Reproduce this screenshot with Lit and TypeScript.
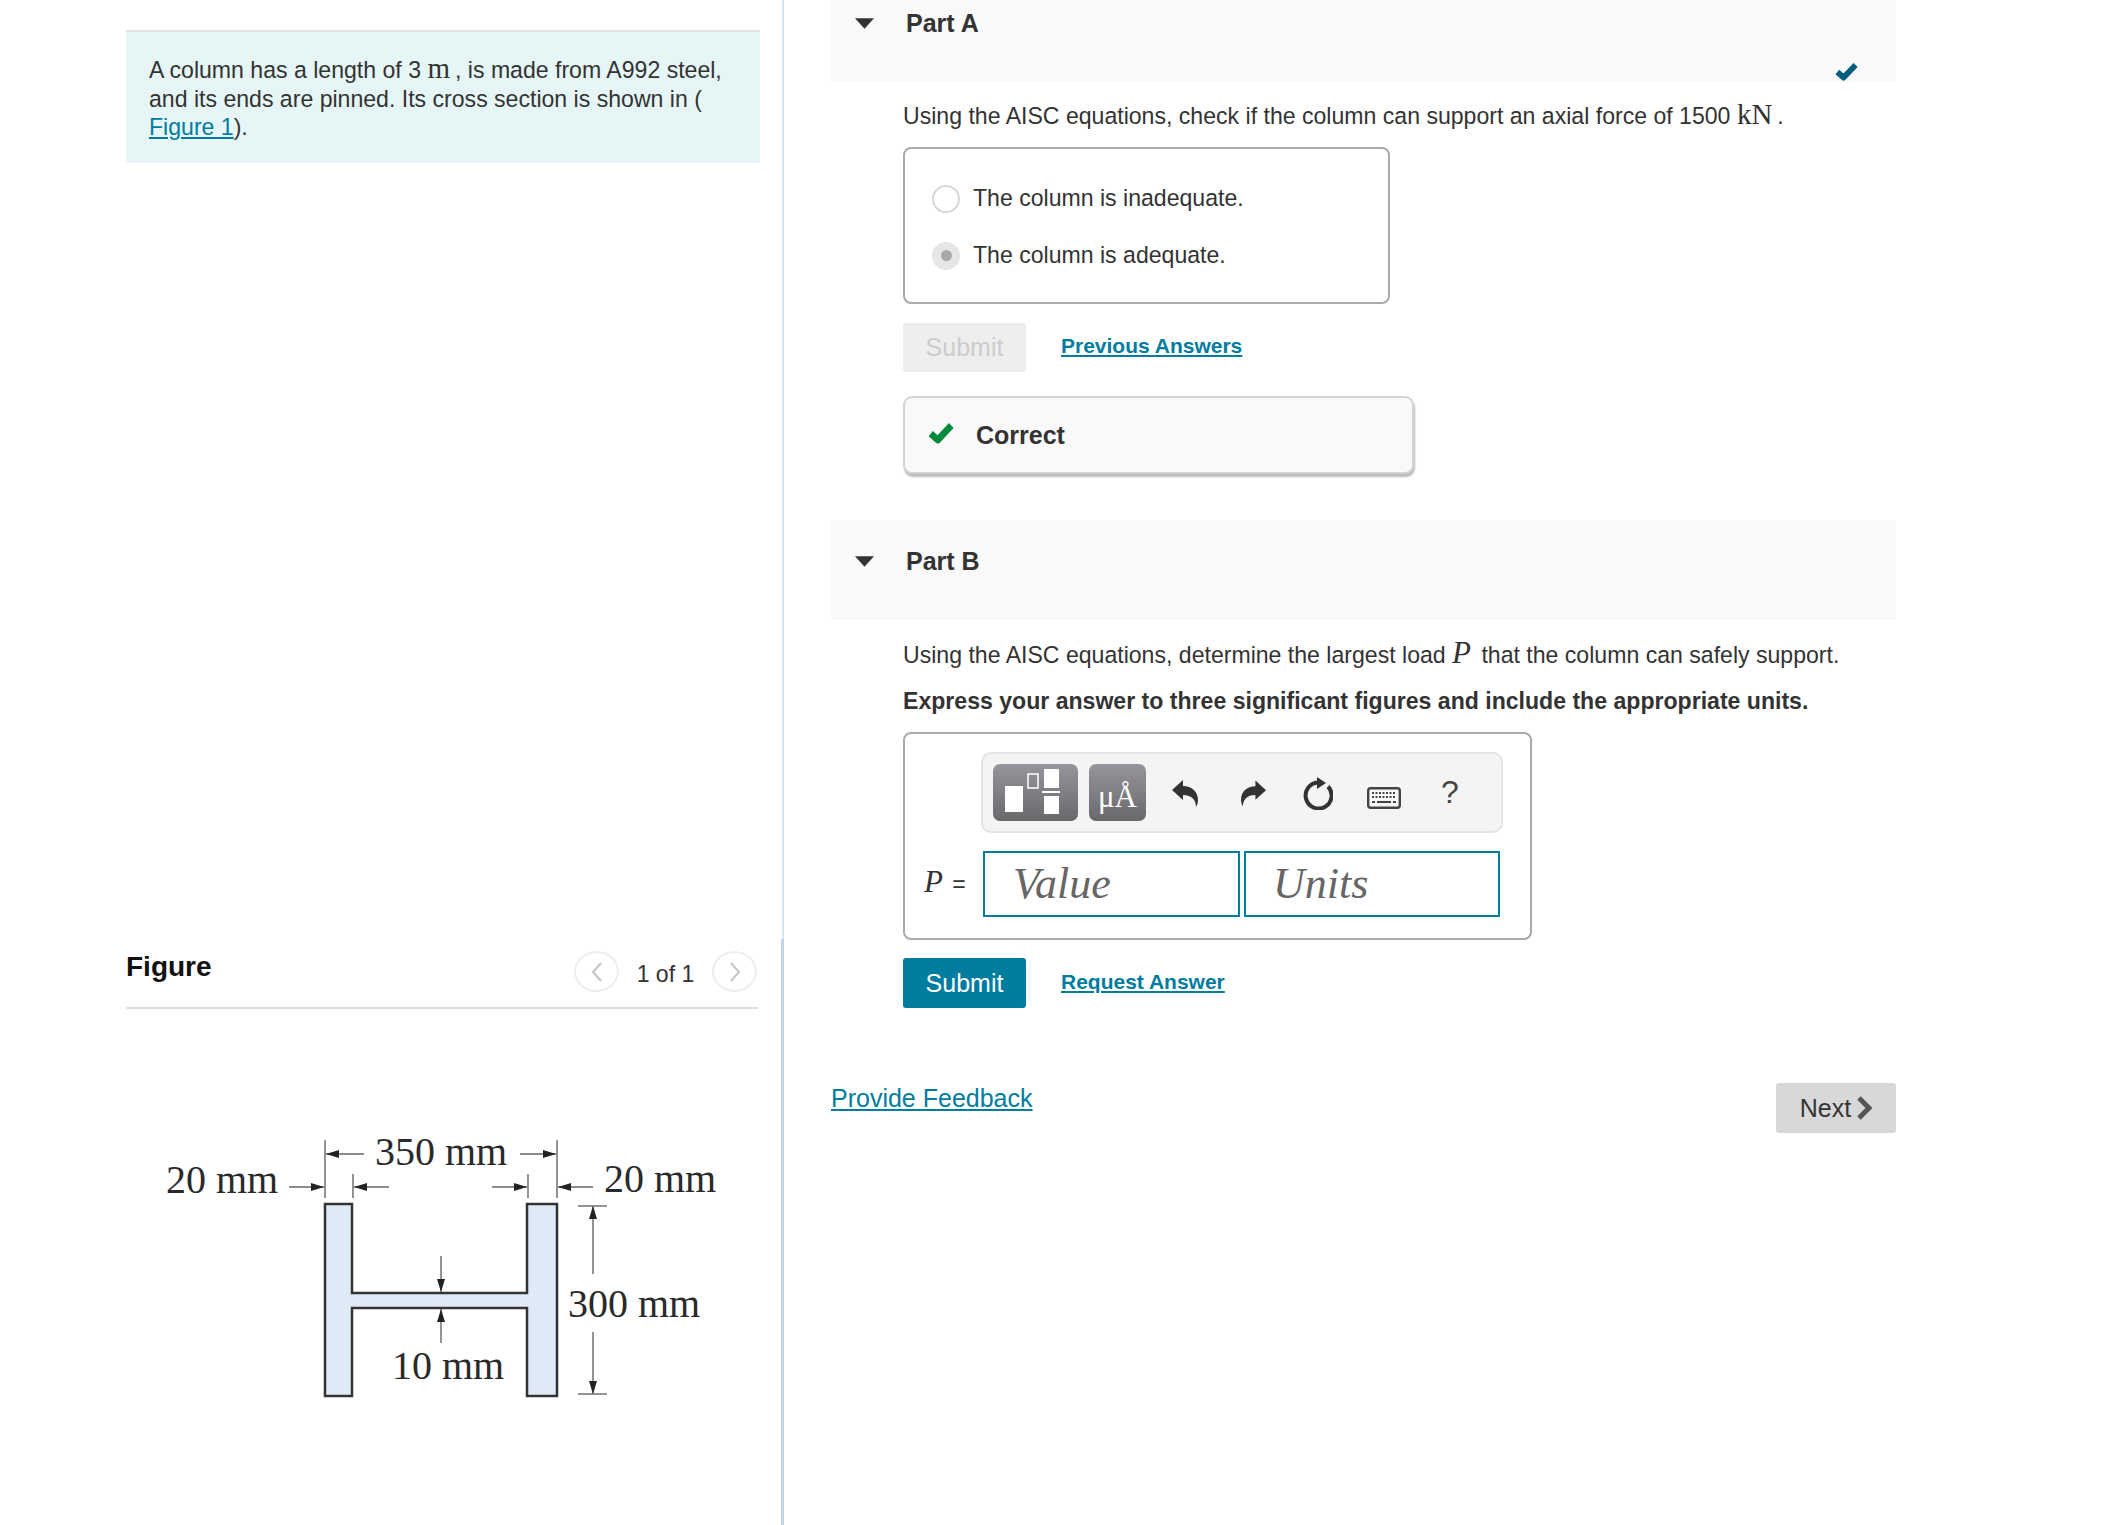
import { LitElement, html, css, svg } from 'lit';
import { customElement } from 'lit/decorators.js';

const check = (cls: string) => html`<svg class=${cls} viewBox="0 0 24 19" preserveAspectRatio="none"><path d="M2.500 10 L9 15.500 L21.500 3" fill="none" stroke="currentColor" stroke-width="6" stroke-linejoin="round"/></svg>`;
const caret = html`<svg class="caret" viewBox="0 0 18 10"><path d="M0 0 H18 L9 10 Z" fill="#333"/></svg>`;

// the cross-section drawing from the figure, in page coordinates
function arrow(x1: number, y1: number, x2: number, y2: number) {
  const dx = Math.sign(x2 - x1), dy = Math.sign(y2 - y1);
  const head = dx
    ? `${x2},${y2} ${x2 - dx * 13},${y2 - 4} ${x2 - dx * 13},${y2 + 4}`
    : `${x2},${y2} ${x2 - 4},${y2 - dy * 13} ${x2 + 4},${y2 - dy * 13}`;
  return svg`<line x1=${x1} y1=${y1} x2=${x2} y2=${y2} stroke="#666" stroke-width="1.4"/><polygon points=${head} fill="#222"/>`;
}

const figure = html`<svg class="drawing" viewBox="126 1110 634 300">
  <path d="M325 1204 H352 V1293 H527 V1204 H557 V1396 H527 V1308 H352 V1396 H325 Z" fill="#deebf7" stroke="#333" stroke-width="2.5"/>
  <g stroke="#666" stroke-width="1.4">
    <line x1="325" y1="1140" x2="325" y2="1198"/>
    <line x1="353" y1="1174" x2="353" y2="1198"/>
    <line x1="528" y1="1174" x2="528" y2="1198"/>
    <line x1="557" y1="1140" x2="557" y2="1198"/>
    <line x1="578" y1="1206" x2="607" y2="1206"/>
    <line x1="578" y1="1394" x2="607" y2="1394"/>
  </g>
  ${arrow(364, 1154, 326, 1154)}
  ${arrow(520, 1154, 556, 1154)}
  ${arrow(289, 1187, 324, 1187)}
  ${arrow(389, 1187, 354, 1187)}
  ${arrow(492, 1187, 527, 1187)}
  ${arrow(593, 1187, 558, 1187)}
  ${arrow(593, 1274, 593, 1206)}
  ${arrow(593, 1332, 593, 1394)}
  ${arrow(441, 1256, 441, 1292)}
  ${arrow(441, 1343, 441, 1309)}
  <g class="dim">
    <text x="375" y="1165">350 mm</text>
    <text x="166" y="1193">20 mm</text>
    <text x="604" y="1192">20 mm</text>
    <text x="568" y="1317">300 mm</text>
    <text x="392" y="1379">10 mm</text>
  </g>
</svg>`;

@customElement('app-root')
export class AppRoot extends LitElement {
  static styles = css`
    :host {
      display: block;
      width: 2125px;
      height: 1525px;
      overflow: hidden;
      background: #fff;
      color: #333;
      font-family: 'Liberation Sans', Arial, sans-serif;
      font-size: 23.08px;
    }
    .page { display: flex; height: 1525px; }
    .left { width: 634px; margin-left: 126px; padding-top: 30px; flex: none; }
    .rule { width: 24px; flex: none; display: flex; flex-direction: column; align-items: flex-end; }
    .rule i { display: block; }
    .rule .top { width: 2px; height: 939px; background: #d6e2ee; }
    .rule .bottom { width: 3px; flex: 1; background: #c3d4e4; }
    .right { width: 1065px; margin-left: 47px; flex: none; }
    .math { font-family: 'Liberation Serif', serif; font-size: 29px; line-height: 0; }
    em.math { font-size: 31px; margin: 0 4px 0 0; }
    a { color: #007c9e; text-decoration: underline; }

    .prompt {
      height: 133px;
      box-sizing: border-box;
      border-top: 2px solid #dde3e3;
      background: #e6f6f6;
      padding: 24px 23px 0;
      line-height: 28.5px;
    }
    .fig-head {
      display: flex;
      width: 632px;
      height: 58px;
      box-sizing: border-box;
      margin-top: 788px;
      border-bottom: 2px solid #ddd;
    }
    .fig-head h2 { margin: 0; font-size: 28px; line-height: 32px; color: #111; flex: 1; }
    .pager { display: flex; height: 41px; align-items: center; }
    .pager span { width: 93px; text-align: center; padding-top: 6px; }
    .circle {
      width: 45px;
      height: 41px;
      box-sizing: border-box;
      border: 2px solid #eee;
      border-radius: 50%;
      display: flex;
      align-items: center;
      justify-content: center;
    }
    .circle svg { width: 14px; height: 22px; }
    .pager .last { margin-right: 1px; }
    .drawing { display: block; width: 634px; height: 300px; margin-top: 101px; }
    .dim text { font-family: 'Liberation Serif', serif; font-size: 40px; fill: #2a2a2a; }

    .part { background: #f9f9f9; display: flex; flex-direction: column; }
    .part-a { height: 82px; }
    .part-b { height: 100px; margin-top: 46px; padding-top: 18px; box-sizing: border-box; }
    .title { display: flex; align-items: center; height: 46px; padding-left: 24px; font-weight: bold; font-size: 25px; }
    .caret { width: 19px; height: 11px; margin-right: 32px; }
    .done { width: 23px; height: 19px; color: #005e7d; align-self: flex-end; margin: 16px 38px 0 0; }
    .body { padding-left: 72px; }
    .q { line-height: 34px; margin-top: 17px; white-space: nowrap; }
    .part-b + .body .q { margin-top: 18px; }
    .dot { margin-left: 5px; }
    .strong { font-weight: bold; line-height: 34px; margin-top: 12px; white-space: nowrap; }

    .choices {
      width: 487px;
      height: 157px;
      box-sizing: border-box;
      margin-top: 14px;
      padding: 21px 0 0 27px;
      border: 2px solid #aaa;
      border-radius: 8px;
    }
    .choice { display: flex; align-items: center; height: 57px; }
    .radio {
      width: 28px;
      height: 28px;
      box-sizing: border-box;
      border: 2px solid #d8d8d8;
      border-radius: 50%;
      margin-right: 13px;
      display: flex;
      align-items: center;
      justify-content: center;
    }
    .radio.on { background: #e6e6e6; border-color: #e6e6e6; }
    .radio.on::after { content: ''; width: 11px; height: 11px; border-radius: 50%; background: #a9a9a9; }

    .actions { display: flex; align-items: center; gap: 35px; margin-top: 19px; }
    .btn {
      width: 123px;
      height: 49px;
      border-radius: 3px;
      display: flex;
      align-items: center;
      justify-content: center;
      font-size: 25px;
    }
    .btn.off { background: #eee; color: #ccc; }
    .btn.go { background: #007c9e; color: #fff; height: 50px; }
    .link { font-weight: bold; font-size: 21px; margin-top: -3px; }

    .result {
      width: 511px;
      height: 78px;
      box-sizing: border-box;
      margin-top: 24px;
      padding-left: 23px;
      display: flex;
      align-items: center;
      gap: 22px;
      background: #f9f9f9;
      border: 2px solid #d4d4d4;
      border-radius: 9px;
      box-shadow: 1px 3px 2px #bbb;
      font-size: 25px;
      font-weight: bold;
    }
    .ok { width: 26px; height: 22px; color: #008a3e; margin-top: -4px; }

    .answer {
      width: 629px;
      height: 208px;
      box-sizing: border-box;
      margin-top: 14px;
      padding-top: 18px;
      border: 2px solid #aaa;
      border-radius: 8px;
    }
    .tools {
      width: 522px;
      height: 81px;
      box-sizing: border-box;
      margin-left: 76px;
      padding-left: 10px;
      display: flex;
      align-items: center;
      background: #f4f4f4;
      border: 2px solid #e4e4e4;
      border-radius: 10px;
    }
    .tool {
      height: 57px;
      border-radius: 7px;
      background: linear-gradient(#97959c, #69686b);
      flex: none;
    }
    .tool.tpl { width: 85px; margin-right: 11px; }
    .tool.unit {
      width: 57px;
      margin-right: 26px;
      color: #fff;
      font-family: 'Liberation Serif', serif;
      font-size: 31px;
      display: flex;
      align-items: flex-end;
      justify-content: center;
      padding-bottom: 9px;
      box-sizing: border-box;
      line-height: 1;
    }
    .tool svg { display: block; }
    .ico { flex: none; display: block; }
    .ico.undo { margin: 2px 43px 0 0; }
    .ico.redo { margin: 2px 37px 0 0; }
    .ico.reset { margin: 2px 34px 0 0; }
    .ico.kbd { margin: 10px 40px 0 0; }
    .help { font-size: 32px; line-height: 1; margin-top: -2px; color: #444; }
    .eq { display: flex; margin-top: 18px; align-items: center; }
    .lhs { width: 59px; margin-left: 19px; white-space: nowrap; }
    .lhs em { font-family: 'Liberation Serif', serif; font-size: 31px; line-height: 0; margin-right: 3px; }
    .box {
      height: 66px;
      box-sizing: border-box;
      border: 2px solid #007c9e;
      font: italic 44px/62px 'Liberation Serif', serif;
      color: #666;
    }
    .box.v { width: 257px; margin-right: 4px; padding-left: 28px; }
    .box.u { width: 256px; padding-left: 27px; }
    .answer + .actions { margin-top: 18px; }

    .foot { display: flex; justify-content: space-between; align-items: flex-start; margin-top: 75px; }
    .foot a { font-size: 25px; line-height: 30px; }
    .next {
      width: 120px;
      height: 50px;
      background: #d8d8d8;
      border-radius: 3px;
      display: flex;
      align-items: center;
      justify-content: center;
      gap: 6px;
      font-size: 25px;
    }
    .next svg { width: 15px; height: 24px; }
  `;

  render() {
    return html`
      <div class="page">
        <div class="left">
          <div class="prompt">
            A column has a length of 3 <span class="math">m</span><span class="dot">,</span> is made from A992 steel,<br />
            and its ends are pinned. Its cross section is shown in (<br />
            <a href="#">Figure 1</a>).
          </div>
          <div class="fig-head">
            <h2>Figure</h2>
            <div class="pager">
              <div class="circle">
                <svg viewBox="0 0 14 22"><path d="M11 2 L3 11 L11 20" fill="none" stroke="#c4c4c4" stroke-width="2"/></svg>
              </div>
              <span>1 of 1</span>
              <div class="circle last">
                <svg viewBox="0 0 14 22"><path d="M3 2 L11 11 L3 20" fill="none" stroke="#c4c4c4" stroke-width="2"/></svg>
              </div>
            </div>
          </div>
          ${figure}
        </div>
        <div class="rule"><i class="top"></i><i class="bottom"></i></div>
        <div class="right">
          <div class="part part-a">
            <div class="title">${caret}Part A</div>
            ${check('done')}
          </div>
          <div class="body">
            <div class="q">Using the AISC equations, check if the column can support an axial force of 1500 <span class="math">kN</span><span class="dot">.</span></div>
            <div class="choices">
              <div class="choice"><span class="radio"></span>The column is inadequate.</div>
              <div class="choice"><span class="radio on"></span>The column is adequate.</div>
            </div>
            <div class="actions">
              <div class="btn off">Submit</div>
              <a class="link" href="#">Previous Answers</a>
            </div>
            <div class="result">${check('ok')}Correct</div>
          </div>
          <div class="part part-b">
            <div class="title">${caret}Part B</div>
          </div>
          <div class="body">
            <div class="q">Using the AISC equations, determine the largest load <em class="math">P</em> that the column can safely support.</div>
            <div class="strong">Express your answer to three significant figures and include the appropriate units.</div>
            <div class="answer">
              <div class="tools">
                <div class="tool tpl">
                  <svg width="85" height="57" viewBox="0 0 85 57">
                    <rect x="12" y="22" width="18" height="26" fill="#fff"/>
                    <rect x="35" y="10" width="10" height="14" fill="none" stroke="#fff" stroke-width="1.5"/>
                    <rect x="51" y="5" width="15" height="19" fill="#fff"/>
                    <rect x="49" y="27" width="18" height="2" fill="#fff"/>
                    <rect x="51" y="32" width="15" height="18" fill="#fff"/>
                  </svg>
                </div>
                <div class="tool unit">μÅ</div>
                <svg class="ico undo" width="26" height="27" viewBox="0 0 26 27"><path d="M0 10 L11 0 V6 C20 6 26 12 26 20 C26 23 25 25 24 27 C24 20 20 15 11 15 V20 Z" fill="#333"/></svg>
                <svg class="ico redo" width="25" height="27" viewBox="0 0 26 27"><path d="M26 10 L15 0 V6 C6 6 0 12 0 20 C0 23 1 25 2 27 C2 20 6 15 15 15 V20 Z" fill="#333"/></svg>
                <svg class="ico reset" width="30" height="33" viewBox="0 0 30 33">
                  <path d="M15 5.500 A13 13 0 1 0 25 9.500" fill="none" stroke="#333" stroke-width="4"/>
                  <path d="M14 0 L23 6 L14 12 Z" fill="#333"/>
                </svg>
                <svg class="ico kbd" width="34" height="22" viewBox="0 0 34 22">
                  <rect x="1.200" y="1.200" width="31.600" height="19.600" rx="2.500" fill="#f8f8f8" stroke="#444" stroke-width="2.400"/>
                  <path d="M5 6 H29 M5 10 H29" stroke="#444" stroke-width="2" stroke-dasharray="2 1.500"/>
                  <path d="M5 15 H8 M10 15 H24 M26 15 H29" stroke="#444" stroke-width="2"/>
                </svg>
                <span class="help">?</span>
              </div>
              <div class="eq">
                <div class="lhs"><em>P</em> =</div>
                <div class="box v">Value</div>
                <div class="box u">Units</div>
              </div>
            </div>
            <div class="actions">
              <div class="btn go">Submit</div>
              <a class="link" href="#">Request Answer</a>
            </div>
          </div>
          <div class="foot">
            <a href="#">Provide Feedback</a>
            <div class="next">Next
              <svg viewBox="0 0 15 24"><path d="M2 2 L12 12 L2 22" fill="none" stroke="#555" stroke-width="5"/></svg>
            </div>
          </div>
        </div>
      </div>
    `;
  }
}
